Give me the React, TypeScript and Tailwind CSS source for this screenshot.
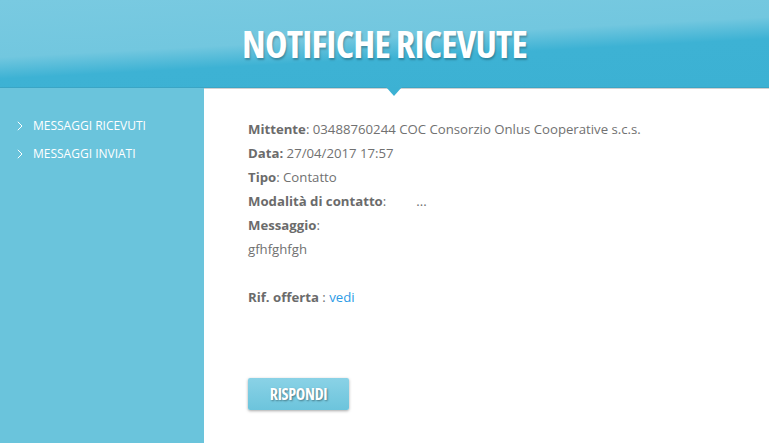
import React from "react";

function Chev() {
  return (
    <svg width="6" height="10" viewBox="0 0 6 10" className="mr-[10px] ml-[1px]">
      <path d="M0.8 0.8 L5 5 L0.8 9.2" fill="none" stroke="#ffffff" strokeWidth="1" />
    </svg>
  );
}

export default function App() {
  const row = "leading-[24px]";
  return (
    <div className="w-[769px] h-[443px] overflow-hidden bg-white" style={{ fontFamily: '"Open Sans", sans-serif' }}>
      <header className="relative h-[88px] flex justify-center items-start bg-[linear-gradient(177deg,#79cae1_0%,#72c7df_45%,#3db2d4_62%,#3cb1d3_100%)] border-b border-[#3aa5c5]">
        <h1
          className="mt-[21px] text-white font-bold text-[38px] leading-[44px] tracking-[-0.8px] [font-stretch:75%] [text-shadow:1px_2px_2px_rgba(0,0,0,0.25)]"
          style={{ fontFamily: '"Open Sans", sans-serif' }}
        >
          NOTIFICHE RICEVUTE
        </h1>
        <div className="absolute left-[386px] top-[87px] w-0 h-0 border-l-[8px] border-r-[8px] border-t-[9px] border-l-transparent border-r-transparent border-t-[#3cb1d3] z-10" />
      </header>
      <div className="flex h-[355px]">
        <aside className="w-[204px] bg-[#6ac4dc] pt-[24px]">
          <ul className="text-white text-[12px] uppercase">
            <li className="flex items-center h-[28px] pl-[16px]">
              <Chev />
              <span>Messaggi ricevuti</span>
            </li>
            <li className="flex items-center h-[28px] pl-[16px]">
              <Chev />
              <span>Messaggi inviati</span>
            </li>
          </ul>
        </aside>
        <main className="flex-1 border-t border-[#d0d0d0] pl-[44px] pt-[28px] text-[13.2px] text-[#717171]">
          <div className={row}><b className="font-bold text-[#6b6b6b]">Mittente</b>: 03488760244 COC Consorzio Onlus Cooperative s.c.s.</div>
          <div className={row}><b className="font-bold text-[#6b6b6b]">Data:</b> 27/04/2017 17:57</div>
          <div className={row}><b className="font-bold text-[#6b6b6b]">Tipo</b>: Contatto</div>
          <div className={row}><b className="font-bold text-[#6b6b6b]">Modalità di contatto</b>:<span className="ml-[30px]">...</span></div>
          <div className={row}><b className="font-bold text-[#6b6b6b]">Messaggio</b>:</div>
          <div className={row}>gfhfghfgh</div>
          <div className={`${row} mt-[24px]`}><b className="font-bold text-[#6b6b6b]">Rif. offerta</b> : <span className="text-[#2b9be6]">vedi</span></div>
          <button className="mt-[69px] w-[101px] h-[32px] rounded-[2px] bg-[linear-gradient(180deg,#8ad2e6,#6cc4dc)] shadow-[0_1px_3px_rgba(0,0,0,0.35)] text-white font-bold text-[16px] [font-stretch:75%] tracking-[-0.3px] [text-shadow:1px_1px_2px_rgba(0,0,0,0.4)]">
            RISPONDI
          </button>
        </main>
      </div>
    </div>
  );
}
